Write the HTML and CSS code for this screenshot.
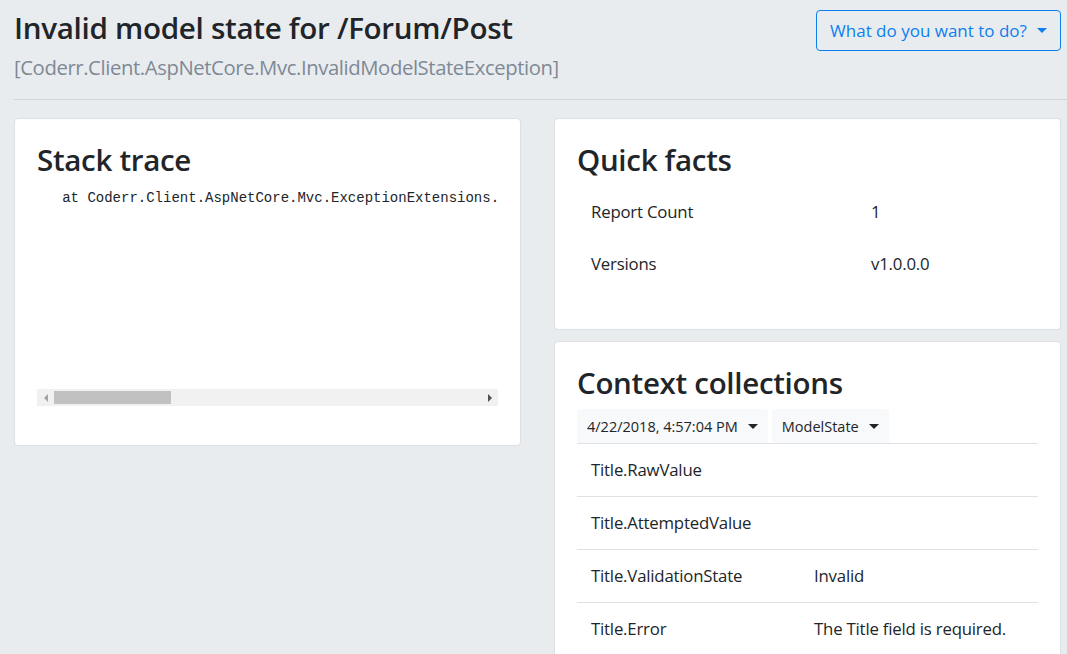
FILE: index.html
```html
<!DOCTYPE html>
<html lang="en">
<head>
<meta charset="utf-8">
<title>Invalid model state</title>
<link rel="stylesheet" href="styles.css">
</head>
<body>
<main class="page">
  <header class="page-header">
    <div class="titles">
      <h1 class="title">Invalid model state for /Forum/Post</h1>
      <div class="subtitle">[Coderr.Client.AspNetCore.Mvc.InvalidModelStateException]</div>
    </div>
    <button class="btn-outline" type="button">What do you want to do? <span class="caret"></span></button>
  </header>
  <hr class="divider">
  <div class="columns">
    <div class="col">
      <section class="card">
        <h2 class="card-title">Stack trace</h2>
        <div class="code-box">
          <pre class="code">   at Coderr.Client.AspNetCore.Mvc.ExceptionExtensions.</pre>
          <div class="hscroll">
            <span class="arrow arrow-left"></span>
            <div class="track"><div class="thumb"></div></div>
            <span class="arrow arrow-right"></span>
          </div>
        </div>
      </section>
    </div>
    <div class="col">
      <section class="card">
        <h2 class="card-title">Quick facts</h2>
        <table class="facts">
          <tr><td class="k">Report Count</td><td>1</td></tr>
          <tr><td class="k">Versions</td><td>v1.0.0.0</td></tr>
        </table>
      </section>
      <section class="card">
        <h2 class="card-title">Context collections</h2>
        <div class="tabs">
          <button class="tab" type="button">4/22/2018, 4:57:04 PM <span class="caret dark"></span></button>
          <button class="tab" type="button">ModelState <span class="caret dark"></span></button>
        </div>
        <table class="ctx">
          <tr><td class="k">Title.RawValue</td><td></td></tr>
          <tr><td class="k">Title.AttemptedValue</td><td></td></tr>
          <tr><td class="k">Title.ValidationState</td><td>Invalid</td></tr>
          <tr><td class="k">Title.Error</td><td>The Title field is required.</td></tr>
        </table>
      </section>
    </div>
  </div>
</main>
</body>
</html>
```

FILE: styles.css
```css
* { box-sizing: border-box; }
html, body { margin: 0; padding: 0; }
body {
  background: #e9ecef;
  font-family: "Open Sans", "Noto Sans", sans-serif;
  color: #212529;
  font-size: 15px;
  overflow: hidden;
  height: 654px;
}
.page { padding: 0 6px 0 14px; }
.page-header {
  display: flex;
  justify-content: space-between;
  align-items: flex-start;
  padding-top: 9px;
}
.title {
  margin: 0;
  font-size: 29.6px;
  font-weight: 600;
  line-height: 38px;
  letter-spacing: -0.3px;
}
.subtitle {
  margin-top: 4px;
  font-size: 20.3px;
  line-height: 32px;
  color: #7e8996;
  letter-spacing: -0.4px;
}
.btn-outline {
  margin-top: 1px;
  height: 41px;
  width: 245px;
  border: 1px solid #0b7ff0;
  border-radius: 4px;
  background: transparent;
  color: #0b7ff0;
  font-family: inherit;
  font-size: 17px;
  padding: 0 12px;
  display: flex;
  align-items: center;
  justify-content: center;
  gap: 10px;
}
.caret {
  display: inline-block;
  width: 0; height: 0;
  border-left: 5px solid transparent;
  border-right: 5px solid transparent;
  border-top: 5px solid #0b7ff0;
}
.caret.dark { border-top-color: #212529; }
.divider {
  border: 0;
  border-top: 1px solid #d2d6da;
  margin: 16px -6px 18px 0;
}
.columns {
  display: grid;
  grid-template-columns: 507px 507px;
  gap: 33px;
  align-items: start;
}
.col { display: flex; flex-direction: column; gap: 11px; }
.card {
  background: #fff;
  border: 1px solid #dcdfe3;
  border-radius: 4px;
  padding: 18px 22px 22px;
}
.card-title {
  margin: 0 0 3px;
  font-size: 29.5px;
  font-weight: 600;
  line-height: 46px;
  letter-spacing: -0.3px;
}
.code-box { margin-bottom: 17px; }
.code {
  margin: 5px 0 0;
  height: 201px;
  overflow: hidden;
  font-family: "Liberation Mono", "DejaVu Sans Mono", monospace;
  font-size: 14px;
  line-height: 20px;
  color: #212529;
  white-space: pre;
}
.hscroll {
  display: flex;
  align-items: center;
  height: 17px;
  background: #f1f1f1;
  width: 461px;
}
.arrow { width: 17px; height: 17px; display: flex; align-items: center; justify-content: center; }
.arrow::before {
  content: "";
  width: 0; height: 0;
  border-top: 4px solid transparent;
  border-bottom: 4px solid transparent;
}
.arrow-left::before { border-right: 4px solid #a3a3a3; }
.arrow-right::before { border-left: 4px solid #505050; }
.track { flex: 1; height: 13px; }
.thumb { width: 117px; height: 13px; background: #c1c1c1; }
table { border-collapse: collapse; width: 100%; }
td { padding: 14px 14px; font-size: 16.8px; line-height: 24px; vertical-align: top; letter-spacing: -0.2px; }
.facts .k { width: 280px; }
.facts { margin-bottom: 17px; }
.tabs {
  display: flex;
  gap: 4px;
  border-bottom: 1px solid #dee2e6;
}
.tab {
  height: 34px;
  background: #f8f9fa;
  border: 0;
  border-radius: 4px 4px 0 0;
  font-family: inherit;
  font-size: 14.5px;
  color: #212529;
  padding: 0 10px;
  display: flex;
  align-items: center;
  gap: 10px;
}
.ctx td { border-bottom: 1px solid #dee2e6; }
.ctx .k { width: 223px; }
```
